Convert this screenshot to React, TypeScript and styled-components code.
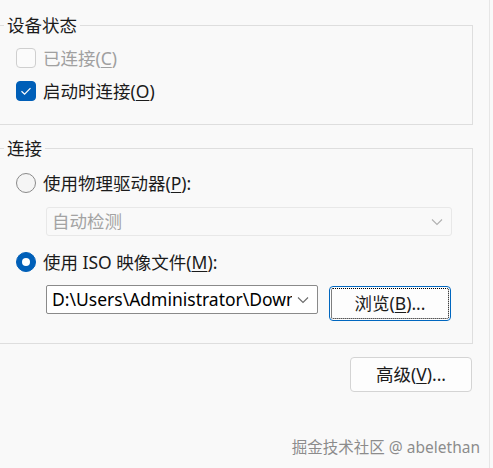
import React from "react";
import styled, { createGlobalStyle } from "styled-components";

const GlobalStyle = createGlobalStyle`
  html, body { margin: 0; padding: 0; background: #f9f9f9; }
  body {
    font-family: "Noto Sans", "Noto Sans CJK SC", sans-serif;
    font-size: 17.5px;
    color: #1b1b1b;
  }
`;

const Page = styled.div`
  width: 493px;
  height: 468px;
  overflow: hidden;
  display: flex;
  background: #f9f9f9;
`;

const Panel = styled.div`
  width: 489px;
  border-right: 1px solid #e6e6e6;
  display: flex;
  flex-direction: column;
  padding-top: 13px;
  box-sizing: content-box;
`;

const Group = styled.fieldset<{ $gap?: number }>`
  margin: ${(p) => p.$gap ?? 0}px 0 0 -2px;
  padding: 0;
  width: 475px;
  box-sizing: border-box;
  border: 1px solid #dedede;
  min-width: 0;
`;

const Legend = styled.legend`
  margin-left: 5px;
  padding: 0 3px;
  line-height: 24px;
  font-size: 17.5px;
  color: #1b1b1b;
`;

const GroupBody = styled.div<{ $top: number; $bottom: number }>`
  display: flex;
  flex-direction: column;
  padding: ${(p) => p.$top}px 0 ${(p) => p.$bottom}px 17px;
`;

const Row = styled.label<{ $mt?: number; $disabled?: boolean }>`
  display: flex;
  align-items: center;
  gap: 7px;
  height: 24px;
  margin-top: ${(p) => p.$mt ?? 0}px;
  line-height: 24px;
  color: ${(p) => (p.$disabled ? "#a0a0a0" : "#1b1b1b")};
  white-space: nowrap;
`;

const Key = styled.span`
  text-decoration: underline;
  text-underline-offset: 2px;
  text-decoration-thickness: 1px;
`;

const CheckBox = styled.span<{ $checked?: boolean; $disabled?: boolean }>`
  width: 20px;
  height: 20px;
  box-sizing: border-box;
  border-radius: 4px;
  flex: none;
  display: flex;
  align-items: center;
  justify-content: center;
  background: ${(p) => (p.$checked ? "#005fb8" : "#fbfbfb")};
  border: 1px solid ${(p) => (p.$checked ? "#005fb8" : p.$disabled ? "#cfcfcf" : "#8a8a8a")};
`;

const Radio = styled.span<{ $checked?: boolean }>`
  width: 20px;
  height: 20px;
  box-sizing: border-box;
  border-radius: 50%;
  flex: none;
  display: flex;
  align-items: center;
  justify-content: center;
  background: ${(p) => (p.$checked ? "#005fb8" : "#f5f5f5")};
  border: 1px solid ${(p) => (p.$checked ? "#005fb8" : "#8a8a8a")};
`;

const RadioDot = styled.span`
  width: 8px;
  height: 8px;
  border-radius: 50%;
  background: #ffffff;
`;

const Select = styled.div<{ $mt: number }>`
  margin: ${(p) => p.$mt}px 0 0 30px;
  width: 406px;
  height: 29px;
  box-sizing: border-box;
  border: 1px solid #e8e8e8;
  border-radius: 3px;
  background: #f9f9f9;
  display: flex;
  align-items: center;
  padding: 0 8px 0 5px;
  color: #a3a3a3;
  line-height: 27px;
`;

const SelectText = styled.span`
  flex: 1;
`;

const FileRow = styled.div<{ $mt: number }>`
  margin: ${(p) => p.$mt}px 0 0 30px;
  display: flex;
  align-items: flex-start;
  gap: 11px;
`;

const Combo = styled.div`
  width: 272px;
  height: 29px;
  box-sizing: border-box;
  border: 1px solid #8a8a8a;
  border-radius: 2px;
  background: #ffffff;
  display: flex;
  align-items: center;
  padding-left: 5px;
`;

const ComboText = styled.span`
  width: 240px;
  overflow: hidden;
  white-space: nowrap;
  color: #000;
  line-height: 27px;
`;

const ComboArrow = styled.span`
  flex: 1;
  display: flex;
  align-items: center;
  justify-content: center;
  padding-right: 3px;
`;

const Button = styled.button<{ $focused?: boolean; $mt?: number }>`
  width: 122px;
  height: 35px;
  margin-top: ${(p) => p.$mt ?? 0}px;
  box-sizing: border-box;
  border-radius: 4px;
  background: #fdfdfd;
  border: 1px solid ${(p) => (p.$focused ? "#0067c0" : "#d4d4d4")};
  outline: ${(p) => (p.$focused ? "1px dotted #000" : "none")};
  outline-offset: -3px;
  font-family: "Noto Sans", "Noto Sans CJK SC", sans-serif;
  font-size: 17.5px;
  color: #1b1b1b;
  padding: 0;
  line-height: 33px;
  flex: none;
  white-space: nowrap;
`;

const Footer = styled.div`
  display: flex;
  flex-direction: column;
  align-items: flex-end;
  padding-right: 17px;
  margin-top: 13px;
`;

const Watermark = styled.div`
  margin-top: 45px;
  margin-right: -8px;
  font-size: 15.5px;
  line-height: 20px;
  color: #8c8c8c;
  text-shadow: 0 0 1px #ffffff;
  white-space: nowrap;
`;

const Chevron = ({ color }: { color: string }) => (
  <svg width="12" height="8" viewBox="0 0 12 8">
    <polyline points="1,1.5 6,6.5 11,1.5" fill="none" stroke={color} strokeWidth="1.1" />
  </svg>
);

const Check = () => (
  <svg width="14" height="14" viewBox="0 0 14 14">
    <polyline points="2.5,7.2 5.6,10.2 11.5,4.2" fill="none" stroke="#ffffff" strokeWidth="1.2" />
  </svg>
);

export default function App() {
  return (
    <>
      <GlobalStyle />
      <Page>
        <Panel>
          <Group>
            <Legend>设备状态</Legend>
            <GroupBody $top={9} $bottom={21}>
              <Row $disabled>
                <CheckBox $disabled />
                <span>
                  已连接(<Key>C</Key>)
                </span>
              </Row>
              <Row $mt={9}>
                <CheckBox $checked>
                  <Check />
                </CheckBox>
                <span>
                  启动时连接(<Key>O</Key>)
                </span>
              </Row>
            </GroupBody>
          </Group>
          <Group $gap={11}>
            <Legend>连接</Legend>
            <GroupBody $top={11} $bottom={22}>
              <Row>
                <Radio />
                <span>
                  使用物理驱动器(<Key>P</Key>):
                </span>
              </Row>
              <Select $mt={12}>
                <SelectText>自动检测</SelectText>
                <Chevron color="#b0b0b0" />
              </Select>
              <Row $mt={14}>
                <Radio $checked>
                  <RadioDot />
                </Radio>
                <span>
                  使用 ISO 映像文件(<Key>M</Key>):
                </span>
              </Row>
              <FileRow $mt={11}>
                <Combo>
                  <ComboText>D:\Users\Administrator\Downloads\ubuntu.iso</ComboText>
                  <ComboArrow>
                    <Chevron color="#6a6a6a" />
                  </ComboArrow>
                </Combo>
                <Button $focused $mt={1}>
                  浏览(<Key>B</Key>)...
                </Button>
              </FileRow>
            </GroupBody>
          </Group>
          <Footer>
            <Button>
              高级(<Key>V</Key>)...
            </Button>
            <Watermark>掘金技术社区 @ abelethan</Watermark>
          </Footer>
        </Panel>
      </Page>
    </>
  );
}
